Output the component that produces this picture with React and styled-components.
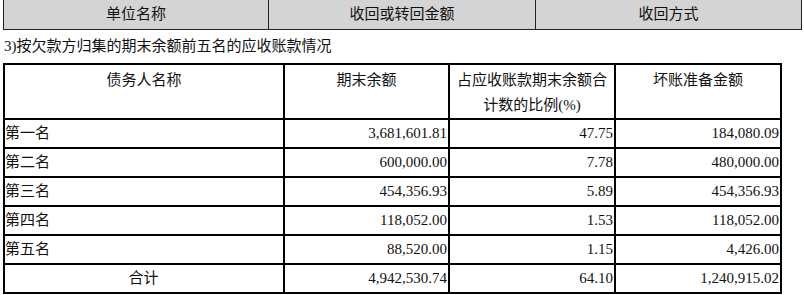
import React from "react";
import styled, { createGlobalStyle } from "styled-components";

const Global = createGlobalStyle`
  body {
    margin: 0;
    background: #fff;
    color: #111;
    font-family: "Liberation Serif", "Noto Sans CJK SC", serif;
  }
`;

const Page = styled.div`
  width: 804px;
  height: 295px;
  overflow: hidden;
  padding-left: 3px;
  box-sizing: border-box;
`;

const TopTable = styled.table`
  border-collapse: collapse;
  width: 798px;
  table-layout: fixed;
  background: #d4d4d4;
  font-size: 15px;
`;

const TopCell = styled.td`
  height: 29px;
  padding: 0;
  text-align: center;
  border-left: 1px solid #222;
  border-right: 1px solid #222;
  border-bottom: 1px solid #222;
  line-height: 29px;
`;

const Caption = styled.p`
  margin: 0;
  padding-left: 1px;
  height: 33px;
  line-height: 33px;
  font-size: 15px;
`;

const Table = styled.table`
  border-collapse: collapse;
  table-layout: fixed;
  width: 777px;
  font-size: 15px;
`;

const Th = styled.td`
  border: 2px solid #000;
  height: 50px;
  padding: 3px 0 0;
  vertical-align: top;
  text-align: center;
  line-height: 25px;
  font-weight: normal;
`;

const Td = styled.td`
  border: 2px solid #000;
  height: 27px;
  padding: 0 1px 0 0;
  line-height: 27px;
  text-align: ${(p) => (p.$align === "left" ? "left" : p.$align === "center" ? "center" : "right")};
  white-space: nowrap;
`;

const rows = [
  ["第一名", "3,681,601.81", "47.75", "184,080.09"],
  ["第二名", "600,000.00", "7.78", "480,000.00"],
  ["第三名", "454,356.93", "5.89", "454,356.93"],
  ["第四名", "118,052.00", "1.53", "118,052.00"],
  ["第五名", "88,520.00", "1.15", "4,426.00"],
];

const App = () => (
  <Page>
    <Global />
    <TopTable>
      <colgroup>
        <col style={{ width: 265 }} />
        <col style={{ width: 267 }} />
        <col style={{ width: 266 }} />
      </colgroup>
      <tbody>
        <tr>
          <TopCell>单位名称</TopCell>
          <TopCell>收回或转回金额</TopCell>
          <TopCell>收回方式</TopCell>
        </tr>
      </tbody>
    </TopTable>
    <Caption>3)按欠款方归集的期末余额前五名的应收账款情况</Caption>
    <Table>
      <colgroup>
        <col style={{ width: 280 }} />
        <col style={{ width: 165 }} />
        <col style={{ width: 166 }} />
        <col style={{ width: 166 }} />
      </colgroup>
      <tbody>
        <tr>
          <Th>债务人名称</Th>
          <Th>期末余额</Th>
          <Th>
            占应收账款期末余额合
            <br />
            计数的比例(%)
          </Th>
          <Th>坏账准备金额</Th>
        </tr>
        {rows.map((r) => (
          <tr key={r[0]}>
            <Td $align="left">{r[0]}</Td>
            <Td>{r[1]}</Td>
            <Td>{r[2]}</Td>
            <Td>{r[3]}</Td>
          </tr>
        ))}
        <tr>
          <Td $align="center">合计</Td>
          <Td>4,942,530.74</Td>
          <Td>64.10</Td>
          <Td>1,240,915.02</Td>
        </tr>
      </tbody>
    </Table>
  </Page>
);

export default App;
